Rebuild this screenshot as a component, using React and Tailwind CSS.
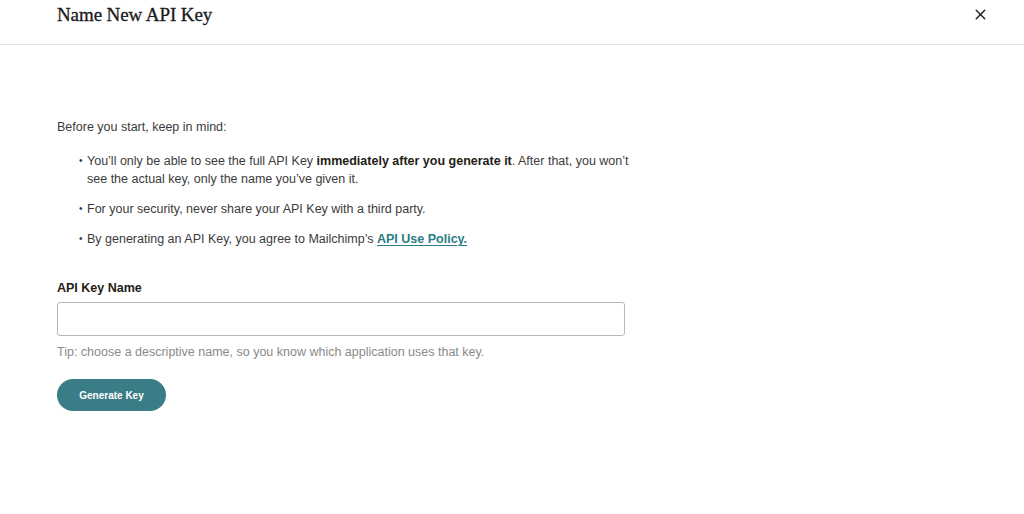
import React from "react";
import { X } from "lucide-react";

const sans = { fontFamily: '"Liberation Sans", Arial, sans-serif' };

const Bullet = ({ children }) => (
  <li className="flex">
    <span className="w-[8px] shrink-0 text-[10px] leading-[18px]">•</span>
    <span>{children}</span>
  </li>
);

const App = () => {
  return (
    <div className="w-[1024px] h-[514px] bg-white text-[#241c15]" style={sans}>
      <div className="h-[45px] flex items-center justify-between pl-[57px] pr-[35px] border-b border-[#e3e3e3]">
        <h1
          className="text-[19px] font-normal tracking-[-0.1px] -mt-[14px] text-[#1a1a1a]"
          style={{ fontFamily: '"Liberation Serif", Georgia, serif', WebkitTextStroke: "0.3px #1a1a1a" }}
        >
          Name New API Key
        </h1>
        <button className="-mt-[16px] text-[#241c15]">
          <X size={17} strokeWidth={2} />
        </button>
      </div>

      <div className="pl-[57px] pt-[73px] text-[12.5px] text-[#3b3b3b]">
        <p className="leading-[18px]">Before you start, keep in mind:</p>
        <ul className="mt-[16px] pl-[22px] flex flex-col gap-[12px] leading-[18px]">
          <Bullet>
            <span className="whitespace-nowrap">
              You’ll only be able to see the full API Key{" "}
              <span className="font-bold text-[#241c15]">immediately after you generate it</span>. After that, you won’t
            </span>
            <br />
            see the actual key, only the name you’ve given it.
          </Bullet>
          <Bullet>For your security, never share your API Key with a third party.</Bullet>
          <Bullet>
            By generating an API Key, you agree to Mailchimp’s{" "}
            <a href="#" className="font-bold text-[#2a7d86] underline underline-offset-2">
              API Use Policy.
            </a>
          </Bullet>
        </ul>

        <label className="block mt-[31px] text-[12.5px] font-bold text-[#241c15] leading-[18px]">
          API Key Name
        </label>
        <input
          type="text"
          className="mt-[5px] block w-[568px] h-[34px] border border-[#b7b7b7] rounded-[3px] px-3 outline-none"
        />
        <p className="mt-[7px] text-[12.5px] text-[#8a8a8a] leading-[18px]">
          Tip: choose a descriptive name, so you know which application uses that key.
        </p>
        <button className="mt-[18px] w-[109px] h-[32px] rounded-full bg-[#3b7d86] text-white text-[10px] font-bold">
          Generate Key
        </button>
      </div>
    </div>
  );
};

export default App;
